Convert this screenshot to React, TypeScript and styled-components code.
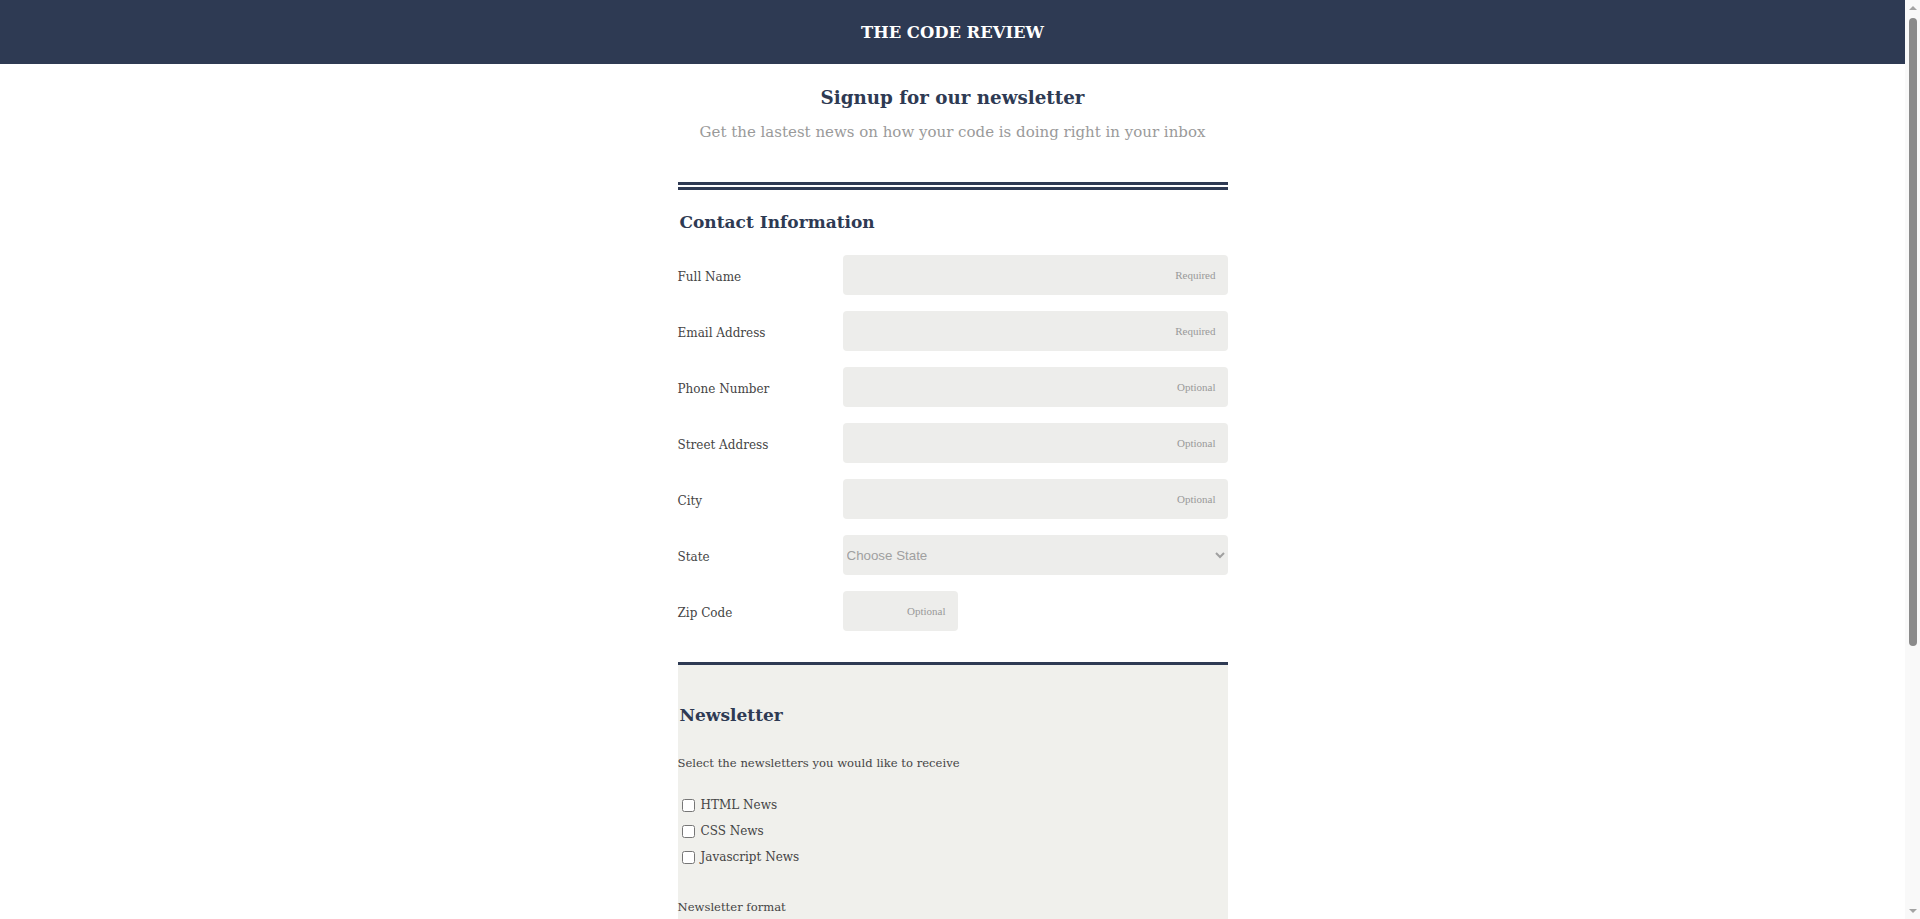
import React from "react";
import styled, { createGlobalStyle } from "styled-components";

const NAVY = "#2e3a53";

const GlobalStyle = createGlobalStyle`
  body {
    margin: 0;
    padding-right: 15px;
    font-family: "DejaVu Serif", "Liberation Serif", serif;
    color: #444;
    background: #fff;
  }
`;

// stand-in for the browser's vertical scrollbar seen in the screenshot
const StyledScrollbar = styled.div`
  position: fixed;
  top: 0;
  right: 0;
  width: 15px;
  height: 100vh;
  display: flex;
  flex-direction: column;
  align-items: center;
  background: #f9f9f9;
`;

const StyledArrow = styled.div<{ $down?: boolean }>`
  width: 0;
  height: 0;
  margin: ${({ $down }) => ($down ? "auto 0 6px" : "6px 0 0")};
  border-left: 4px solid transparent;
  border-right: 4px solid transparent;
  ${({ $down }) => ($down ? "border-top: 4px solid #a3a3a3;" : "border-bottom: 4px solid #a3a3a3;")}
`;

const StyledThumb = styled.div`
  width: 8px;
  height: 628px;
  margin-top: 8px;
  border-radius: 4px;
  background: #8b8b8b;
`;

const StyledHeader = styled.header`
  display: flex;
  align-items: center;
  justify-content: center;
  height: 64px;
  background: ${NAVY};
`;

const StyledBrand = styled.h1`
  margin: 0;
  color: #fff;
  font-size: 16.4px;
  font-weight: bold;
`;

const StyledMain = styled.main`
  width: 550px;
  margin: 0 auto;
`;

const StyledIntro = styled.div`
  padding-top: 22px;
  text-align: center;
`;

const StyledTitle = styled.h2`
  margin: 0;
  color: ${NAVY};
  font-size: 18.3px;
  line-height: 24px;
`;

const StyledSubtitle = styled.p`
  margin: 10px 0 0;
  color: #9a9a9a;
  font-size: 15px;
  line-height: 24px;
`;

const StyledDivider = styled.div`
  margin-top: 38px;
  border-top: 8px double ${NAVY};
`;

const StyledSectionTitle = styled.h3<{ $top: number }>`
  margin: ${({ $top }) => $top}px 0 0 2px;
  color: ${NAVY};
  font-size: 17px;
  line-height: 28px;
`;

const StyledFields = styled.div`
  display: grid;
  grid-template-columns: 165px 1fr;
  row-gap: 16px;
  margin-top: 19px;
`;

const StyledLabel = styled.label`
  display: flex;
  align-items: center;
  padding-top: 4px;
  height: 40px;
  box-sizing: border-box;
  color: #444;
  font-size: 12px;
`;

const StyledInput = styled.input<{ $short?: boolean }>`
  width: ${({ $short }) => ($short ? "115px" : "100%")};
  height: 40px;
  box-sizing: border-box;
  padding: 0 12px;
  border: none;
  border-radius: 4px;
  background: #ededeb;
  font-family: "Liberation Serif", serif;
  font-size: 11px;
  text-align: right;
  outline: none;

  &::placeholder {
    color: #999;
  }
`;

const StyledSelect = styled.select`
  width: 100%;
  height: 40px;
  box-sizing: border-box;
  padding: 0;
  border: none;
  border-radius: 4px;
  background: #ededeb;
  color: #a0a0a0;
  font-family: "Liberation Sans", Arial, sans-serif;
  font-size: 13.33px;
  outline: none;
`;

const StyledNewsletter = styled.section`
  margin-top: 31px;
  padding-bottom: 60px;
  border-top: 3px solid ${NAVY};
  background: #f0f0ec;
`;

const StyledText = styled.p<{ $top: number }>`
  margin: ${({ $top }) => $top}px 0 0;
  color: #444;
  font-size: 11.6px;
  line-height: 20px;
`;

const StyledOptions = styled.div`
  display: flex;
  flex-direction: column;
  gap: 6px;
  margin-top: 22px;
`;

const StyledOption = styled.label`
  display: flex;
  align-items: center;
  height: 20px;
  color: #444;
  font-size: 12px;

  input {
    margin: 0 6px 0 4px;
    width: 13px;
    height: 13px;
  }
`;

const StyledTextArea = styled.textarea`
  display: block;
  width: 100%;
  height: 110px;
  margin-top: 14px;
  box-sizing: border-box;
  padding: 10px;
  border: none;
  border-radius: 4px;
  background: #fff;
  font-family: "Liberation Serif", serif;
  resize: none;
`;

const StyledButton = styled.button`
  margin-top: 30px;
  padding: 12px 28px;
  border: none;
  border-radius: 4px;
  background: ${NAVY};
  color: #fff;
  font-family: "DejaVu Serif", serif;
  font-size: 13px;
  font-weight: bold;
`;

const fields = [
  { label: "Full Name", hint: "Required" },
  { label: "Email Address", hint: "Required" },
  { label: "Phone Number", hint: "Optional" },
  { label: "Street Address", hint: "Optional" },
  { label: "City", hint: "Optional" },
];

const topics = ["HTML News", "CSS News", "Javascript News"];
const formats = ["HTML", "Plain text"];

export default function App() {
  return (
    <>
      <GlobalStyle />
      <StyledHeader>
        <StyledBrand>THE CODE REVIEW</StyledBrand>
      </StyledHeader>
      <StyledMain>
        <StyledIntro>
          <StyledTitle>Signup for our newsletter</StyledTitle>
          <StyledSubtitle>Get the lastest news on how your code is doing right in your inbox</StyledSubtitle>
        </StyledIntro>
        <StyledDivider />
        <StyledSectionTitle $top={18}>Contact Information</StyledSectionTitle>
        <StyledFields>
          {fields.map((f) => (
            <React.Fragment key={f.label}>
              <StyledLabel>{f.label}</StyledLabel>
              <StyledInput type="text" placeholder={f.hint} />
            </React.Fragment>
          ))}
          <StyledLabel>State</StyledLabel>
          <StyledSelect defaultValue="">
            <option value="" disabled>
              Choose State
            </option>
            <option>Alabama</option>
            <option>Alaska</option>
          </StyledSelect>
          <StyledLabel>Zip Code</StyledLabel>
          <div>
            <StyledInput $short type="text" placeholder="Optional" />
          </div>
        </StyledFields>
        <StyledNewsletter>
          <StyledSectionTitle $top={36}>Newsletter</StyledSectionTitle>
          <StyledText $top={24}>Select the newsletters you would like to receive</StyledText>
          <StyledOptions>
            {topics.map((t) => (
              <StyledOption key={t}>
                <input type="checkbox" />
                {t}
              </StyledOption>
            ))}
          </StyledOptions>
          <StyledText $top={30}>Newsletter format</StyledText>
          <StyledOptions>
            {formats.map((t) => (
              <StyledOption key={t}>
                <input type="radio" name="format" />
                {t}
              </StyledOption>
            ))}
          </StyledOptions>
          <StyledText $top={30}>Other topics you'd like to hear about</StyledText>
          <StyledTextArea />
          <StyledButton>Sign Up</StyledButton>
        </StyledNewsletter>
      </StyledMain>
      <StyledScrollbar>
        <StyledArrow />
        <StyledThumb />
        <StyledArrow $down />
      </StyledScrollbar>
    </>
  );
}
